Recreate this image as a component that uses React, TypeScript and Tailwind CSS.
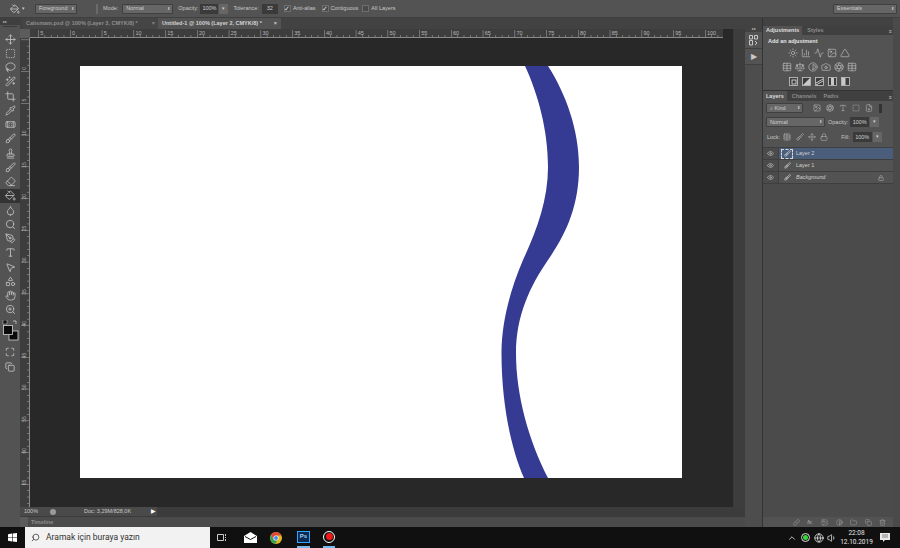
import {
  Activity, Aperture, BarChart3, Bandage, Camera, ChevronUp, Contrast, Copy, Crop, Droplet, Eraser, Eye, FileDown,
  Folder, Globe, Hand, Image, Link, Lock, Move, Brush, PaintBucket, Pipette, PenTool, Search, Scale, Shapes,
  SquareDashed, Stamp, Sun, Table, Trash2, Triangle, Type, Volume1, Wand2, ZoomIn, MousePointer2, Lasso, Maximize,
} from 'lucide-react';

const toolIcons = [
  Move, SquareDashed, Lasso, Wand2, Crop, Pipette, Bandage, Brush, Stamp, Brush, Eraser, PaintBucket, Droplet, Search,
  PenTool, Type, MousePointer2, Shapes, Hand, ZoomIn,
];

function Select({ label, className }: { label: string; className: string }) {
  return (
    <div className={`flex h-[10px] items-center justify-between rounded-[1px] border border-[#3f3f3f] bg-[#666666] pl-[3px] pr-[2px] text-[5.5px] text-[#cfcfcf] ${className}`}>
      <span>{label}</span>
      <span className="text-[4px] leading-none">⬍</span>
    </div>
  );
}

function Percent({ value, className }: { value: string; className: string }) {
  return (
    <div className="flex items-center gap-[1px]">
      <div className={`flex h-[10px] items-center justify-center bg-[#3a3a3a] text-[5.5px] text-[#d0d0d0] ${className}`}>{value}</div>
      <div className="flex h-[10px] w-[9px] items-center justify-center bg-[#666666] text-[5px] text-[#cfcfcf]">▾</div>
    </div>
  );
}

function Check({ label, on, className }: { label: string; on: boolean; className: string }) {
  return (
    <div className={`flex items-center gap-[2px] text-[5.5px] text-[#c8c8c8] ${className}`}>
      <div className="flex h-[7px] w-[7px] items-center justify-center border border-[#6e6e6e] bg-[#4a4a4a] text-[7px] leading-none text-[#e0e0e0]">
        {on ? '✓' : ''}
      </div>
      <span>{label}</span>
    </div>
  );
}

function HRuler() {
  const w = 703;
  const ticks = Array.from({ length: 112 }, (_, i) => i);
  const labels = [-5, 0, 5, 10, 15, 20, 25, 30, 35, 40, 45, 50, 55, 60, 65, 70, 75, 80, 85, 90, 95, 100];
  return (
    <svg width={w} height={9} className="block">
      <rect width={w} height={9} fill="#3d3d3d" />
      <rect y={8} width={w} height={1} fill="#8a8a8a" />
      <rect width={10} height={9} fill="#5c5c5c" />
      {ticks.map((i) => {
        const x = 18.25 + i * 6.35;
        return <rect key={i} x={x} y={i % 5 === 0 ? 1 : 6} width={0.6} height={i % 5 === 0 ? 7 : 2} fill="#9a9a9a" />;
      })}
      {labels.map((n) => {
        const x = 50 + (n / 5) * 31.75 + 2;
        return (
          <text key={n} x={x} y={6} fontSize={5.5} fill="#b5b5b5" fontFamily="Liberation Sans, sans-serif">
            {Math.abs(n)}
          </text>
        );
      })}
    </svg>
  );
}

function VRuler() {
  const h = 469;
  const ticks = Array.from({ length: 74 }, (_, i) => i);
  const labels = [0, 5, 10, 15, 20, 25, 30, 35, 40, 45, 50, 55, 60, 65];
  return (
    <svg width={10} height={h} className="block shrink-0">
      <rect width={10} height={h} fill="#3d3d3d" />
      <rect x={9} width={1} height={h} fill="#8a8a8a" />
      {ticks.map((i) => {
        const y = 1.5 + i * 6.35;
        return <rect key={i} x={i % 5 === 0 ? 1 : 7} y={y} width={i % 5 === 0 ? 8 : 2} height={0.6} fill="#9a9a9a" />;
      })}
      {labels.map((n) => {
        const y = 29 + (n / 5) * 31.75;
        return (
          <text key={n} x={5.5} y={y} fontSize={5} fill="#b5b5b5" fontFamily="Liberation Sans, sans-serif" transform={`rotate(-90 5.5 ${y})`} textAnchor="end">
            {n}
          </text>
        );
      })}
    </svg>
  );
}

function Toolbar() {
  return (
    <div className="flex w-5 shrink-0 flex-col bg-[#535353]">
      <div className="h-[7px] bg-[#3f3f3f] pl-[3px] text-[4px] leading-[7px] text-[#bbbbbb]">▸▸</div>
      <div className="mx-[3px] mt-[1px] h-[1px] bg-[#3a3a3a]" />
      <div className="mt-[5px] flex flex-col">
        {toolIcons.map((Icon, i) => (
          <div key={i} className={`flex h-[14.25px] items-center justify-center ${i === 11 ? 'bg-[#333333]' : ''}`}>
            <Icon size={11} strokeWidth={1.8} className="text-[#c4c4c4]" />
          </div>
        ))}
      </div>
      <div className="ml-[2px] mt-[3px] h-[17px] w-[17px]">
        <svg width={17} height={21} viewBox="0 0 17 21">
          <rect x={1} y={0} width={4} height={4} fill="#111" stroke="#ccc" strokeWidth={0.5} />
          <path d="M11 1 l3 0 l0 3" fill="none" stroke="#ccc" strokeWidth={0.8} />
          <rect x={7} y={11} width={9} height={9} fill="#0b0b0b" stroke="#d5d5d5" strokeWidth={0.8} />
          <rect x={1.5} y={5.5} width={9} height={9} fill="#0b0b0b" stroke="#d5d5d5" strokeWidth={0.8} />
        </svg>
      </div>
      <div className="mt-[7px] flex h-[15px] items-center justify-center">
        <Maximize size={10} className="text-[#c4c4c4]" />
      </div>
      <div className="flex h-[15px] items-center justify-center">
        <Copy size={10} className="text-[#c4c4c4]" />
      </div>
    </div>
  );
}

function Curve() {
  return (
    <svg viewBox="0 0 602 412" className="block h-full w-full">
      <path
        d="M445 0 L468 0 C486 28 499 64 499 101 C499 140 486 168 468 194 C450 220 436 250 436 287 C436 330 449 375 468 412 L444 412 C430 380 421.5 335 421.5 287 C421.5 255 431 222 443 194 C456 166 468 135 468 101 C468 64 458 28 445 0 Z"
        fill="#353b93"
      />
    </svg>
  );
}

function AdjSquare({ kind }: { kind: number }) {
  return (
    <svg width={9} height={9} viewBox="0 0 9 9" className="text-[#c9c9c9]">
      <rect x={0.5} y={0.5} width={8} height={8} fill="#3d3d3d" stroke="currentColor" strokeWidth={0.8} />
      {kind === 0 && <rect x={3} y={3} width={4} height={4} fill="none" stroke="currentColor" />}
      {kind === 1 && <path d="M1 8 L8 1 L8 8 Z" fill="currentColor" />}
      {kind === 2 && <path d="M1 6 L8 2 M1 8 L8 4" stroke="currentColor" />}
      {kind === 3 && <rect x={3} y={1} width={3} height={7} fill="currentColor" />}
      {kind === 4 && <rect x={1} y={1} width={3.5} height={7} fill="currentColor" />}
    </svg>
  );
}

function AdjPanel() {
  const s = { size: 10, strokeWidth: 1.5, className: 'text-[#c4c4c4]' };
  return (
    <div className="flex h-[64px] flex-col bg-[#535353]">
      <div className="flex h-[9px] items-end bg-[#404040] text-[5.5px] font-bold">
        <div className="flex h-[9px] items-center bg-[#535353] px-[3px] text-[#dddddd]">Adjustments</div>
        <div className="flex h-[9px] items-center px-[5px] text-[#8c8c8c]">Styles</div>
        <div className="ml-auto pr-[1px] text-[5px] text-[#cccccc]">≡</div>
      </div>
      <div className="mt-[2px] pl-[5px] text-[5.5px] font-bold text-[#e4e4e4]">Add an adjustment</div>
      <div className="mt-[3px] flex flex-col items-center gap-[4px] pr-[18px]">
        <div className="flex h-[10px] gap-[3px]">
          <Sun {...s} /><BarChart3 {...s} /><Activity {...s} /><Image {...s} /><Triangle {...s} />
        </div>
        <div className="flex h-[10px] gap-[3px]">
          <Table {...s} /><Scale {...s} /><Contrast {...s} /><Camera {...s} /><Aperture {...s} /><Table {...s} />
        </div>
        <div className="flex h-[10px] items-center gap-[4px]">
          {[0, 1, 2, 3, 4].map((k) => <AdjSquare key={k} kind={k} />)}
        </div>
      </div>
    </div>
  );
}

function LayerRow({ name, active, italic, locked }: { name: string; active?: boolean; italic?: boolean; locked?: boolean }) {
  return (
    <div className="flex h-3 border-b border-[#3e3e3e]">
      <div className="flex w-4 shrink-0 items-center justify-center border-r border-[#3e3e3e]">
        <Eye size={7} className="text-[#c6c6c6]" />
      </div>
      <div className={`flex flex-1 items-center pl-[2px] text-[5.5px] text-[#d0d0d0] ${active ? 'bg-[#4a5e7c]' : 'bg-[#535353]'} ${italic ? 'italic' : ''}`}>
        <div className={`flex h-[10px] w-[12px] items-center justify-center ${active ? 'border border-dashed border-[#d8d8d8]' : ''}`}>
          <Brush size={7} className="text-[#e0e0e0]" />
        </div>
        <span className="ml-[3px]">{name}</span>
        {locked && <Lock size={6} className="ml-auto mr-[9px] text-[#b5b5b5]" />}
      </div>
    </div>
  );
}

function LayersPanel() {
  const t = { size: 8, strokeWidth: 1.6, className: 'text-[#bdbdbd]' };
  const f = { size: 7, strokeWidth: 1.6, className: 'text-[#a6a6a6]' };
  return (
    <div className="flex flex-1 flex-col bg-[#4b4b4b]">
      <div className="flex h-[10px] items-end bg-[#404040] text-[5.5px] font-bold">
        <div className="flex h-[10px] items-center bg-[#535353] px-[3px] text-[#dddddd]">Layers</div>
        <div className="flex h-[10px] items-center px-[5px] text-[#8c8c8c]">Channels</div>
        <div className="flex h-[10px] items-center px-[2px] text-[#8c8c8c]">Paths</div>
        <div className="ml-auto pr-[1px] text-[5px] text-[#cccccc]">≡</div>
      </div>
      <div className="flex h-[46px] flex-col bg-[#535353] pl-[3px] text-[5.5px] text-[#c8c8c8]">
        <div className="mt-[1px] flex h-[12px] items-center gap-[5px]">
          <Select label="⌕ Kind" className="w-[37px]" />
          <Image {...t} className="ml-[5px] text-[#bdbdbd]" /><Aperture {...t} /><Type {...t} /><SquareDashed {...t} /><FileDown {...t} />
          <div className="ml-[1px] h-[9px] w-[3px] bg-[#333333]" />
        </div>
        <div className="mt-[2px] flex h-[12px] items-center">
          <Select label="Normal" className="w-[59px]" />
          <span className="ml-[3px]">Opacity:</span>
          <div className="ml-[2px]"><Percent value="100%" className="w-[19px]" /></div>
        </div>
        <div className="mt-[3px] flex h-[12px] items-center">
          <span className="ml-[1px]">Lock:</span>
          <Table {...t} className="ml-[3px] text-[#bdbdbd]" />
          <Brush {...t} className="ml-[5px] text-[#bdbdbd]" />
          <Move {...t} className="ml-[4px] text-[#bdbdbd]" />
          <Lock {...t} className="ml-[4px] text-[#bdbdbd]" />
          <span className="ml-[13px]">Fill:</span>
          <div className="ml-[3px]"><Percent value="100%" className="w-[19px]" /></div>
        </div>
      </div>
      <div className="flex flex-1 flex-col border-t border-[#3e3e3e]">
        <LayerRow name="Layer 2" active />
        <LayerRow name="Layer 1" />
        <LayerRow name="Background" italic locked />
      </div>
      <div className="flex h-[10px] items-center justify-end gap-[7.5px] bg-[#535353] pr-[7px]">
        <Link {...f} />
        <span className="text-[6px] italic text-[#b5b5b5]">fx.</span>
        <Image {...f} /><Contrast {...f} /><Folder {...f} /><Copy {...f} /><Trash2 {...f} />
      </div>
    </div>
  );
}

export default function App() {
  return (
    <div className="flex h-[548px] w-[900px] flex-col overflow-hidden bg-[#535353] font-['Liberation_Sans',sans-serif]">
      {/* options bar */}
      <div className="flex h-[18px] shrink-0 items-center border-b border-[#3f3f3f] bg-[#535353]">
        <PaintBucket size={10} className="ml-[10px] text-[#c8c8c8]" />
        <span className="ml-[2px] text-[5px] text-[#c8c8c8]">▾</span>
        <Select label="Foreground" className="ml-[10px] w-[42px]" />
        <div className="ml-[19px] h-[10px] w-[2px] bg-[#6a6a6a]" />
        <span className="ml-[5px] text-[5.5px] text-[#c8c8c8]">Mode:</span>
        <Select label="Normal" className="ml-[4px] w-[51px]" />
        <span className="ml-[5px] text-[5.5px] text-[#c8c8c8]">Opacity:</span>
        <div className="ml-[2px]"><Percent value="100%" className="w-[18px]" /></div>
        <span className="ml-[5px] text-[5.5px] text-[#c8c8c8]">Tolerance:</span>
        <div className="ml-[3px] flex h-[10px] w-[16px] items-center justify-center bg-[#3a3a3a] text-[5.5px] text-[#d0d0d0]">32</div>
        <Check label="Anti-alias" on className="ml-[6px]" />
        <Check label="Contiguous" on className="ml-[6px]" />
        <Check label="All Layers" on={false} className="ml-[4px]" />
        <Select label="Essentials" className="ml-auto mr-[3px] w-[64px]" />
      </div>

      <div className="flex min-h-0 flex-1">
        <Toolbar />

        {/* document column */}
        <div className="flex w-[725px] shrink-0 flex-col bg-[#282828]">
          <div className="flex h-[11px] shrink-0 items-end bg-[#424242] pl-[3px] text-[5.5px] font-bold">
            <div className="flex h-[11px] w-[135px] items-center justify-between bg-[#454545] px-[3px] text-[#8f8f8f]">
              <span>Calısmam.psd @ 100% (Layer 3, CMYK/8) *</span>
              <span>×</span>
            </div>
            <div className="flex h-[11px] w-[123px] items-center justify-between bg-[#535353] px-[4px] text-[#d4d4d4]">
              <span>Untitled-1 @ 100% (Layer 2, CMYK/8) *</span>
              <span>×</span>
            </div>
          </div>
          <div className="flex min-h-0 flex-1">
            <div className="flex w-[713px] shrink-0 flex-col">
              <HRuler />
              <div className="flex min-h-0 flex-1">
                <VRuler />
                <div className="flex-1 pl-[50px] pt-[28px]">
                  <div className="h-[412px] w-[602px] bg-white">
                    <Curve />
                  </div>
                </div>
              </div>
            </div>
            <div className="w-[12px] shrink-0 border-l border-[#3a3a3a] bg-[#3d3d3d]" />
          </div>
          <div className="flex h-[9px] shrink-0 items-center bg-[#3c3c3c] text-[5.5px] text-[#c8c8c8]">
            <div className="flex h-[9px] w-[137px] items-center bg-[#4a4a4a] pl-[4px]">
              <span className="w-[26px]">100%</span>
              <div className="h-[6px] w-[6px] rounded-full bg-[#9a9a9a]" />
              <span className="ml-[28px]">Doc: 3,29M/828,0K</span>
              <span className="ml-auto pr-[1px] text-[6px] text-white">▶</span>
            </div>
          </div>
          <div className="flex h-[11px] shrink-0 items-center border-t border-[#3a3a3a] bg-[#4b4b4b] text-[5.5px] font-bold text-[#8c8c8c]">
            <div className="h-[10px] w-[8px] bg-[#5c5c5c]" />
            <span className="ml-[3px]">Timeline</span>
          </div>
        </div>

        {/* collapsed dock */}
        <div className="flex w-[18px] shrink-0 flex-col border-r border-[#333333] bg-[#4d4d4d]">
          <div className="flex h-[14px] items-end justify-center bg-[#424242] text-[4px] leading-[6px] text-[#bbbbbb]">▸▸</div>
          <div className="flex h-[17px] items-center justify-center border-b border-[#3f3f3f] bg-[#535353]">
            <svg width={9} height={11} viewBox="0 0 9 11" fill="none" stroke="#c8c8c8" strokeWidth={1}>
              <path d="M.5 .5 H3.5 V4 H.5 Z M5.5 .5 H8.5 V4 H5.5 Z M.5 5.5 H3.5 V10 H.5 Z M6 6 L8 8 L6 10" />
            </svg>
          </div>
          <div className="flex h-[16px] items-center justify-center border-b border-[#3f3f3f] bg-[#535353] text-[8px] text-[#c8c8c8]">▶</div>
        </div>

        {/* right panels */}
        <div className="flex min-w-0 flex-1">
          <div className="flex w-[130px] shrink-0 flex-col">
            <div className="h-[8px] shrink-0 bg-[#424242]" />
            <AdjPanel />
            <div className="h-[1px] shrink-0 bg-[#333333]" />
            <LayersPanel />
          </div>
          <div className="flex-1 bg-[#4a4a4a]" />
        </div>
      </div>

      {/* taskbar */}
      <div className="flex h-[21px] shrink-0 items-center bg-[#101010]">
        <svg width={9} height={9} viewBox="0 0 9 9" className="ml-[8px]">
          <path d="M0 1.2 L4 .6 V4.2 H0 Z M4.6 .5 L9 0 V4.2 H4.6 Z M0 4.8 H4 V8.4 L0 7.8 Z M4.6 4.8 H9 V9 L4.6 8.5 Z" fill="#ffffff" />
        </svg>
        <div className="ml-[8px] flex h-[21px] w-[185px] items-center bg-[#f2f2f2] pl-[6px] font-['Roboto',sans-serif] text-[8.5px] text-[#333333]">
          <Search size={9} className="-scale-x-100 text-[#333333]" />
          <span className="ml-[6px]">Aramak için buraya yazın</span>
        </div>
        <svg width={10} height={9} viewBox="0 0 10 9" fill="none" stroke="#cccccc" className="ml-[7px]">
          <path d="M.5 1.5 H6.5 V7.5 H.5 Z M8.5 1 V3 M8.5 4 V5 M8.5 6 V8" />
        </svg>
        <svg width={13} height={11} viewBox="0 0 13 11" className="ml-[17px]">
          <path d="M0 4 L6.5 0 L13 4 V11 H0 Z" fill="#ffffff" />
          <path d="M1 4.5 L6.5 7.5 L12 4.5" fill="none" stroke="#101010" />
        </svg>
        <svg width={12} height={12} viewBox="0 0 12 12" className="ml-[13px]">
          <circle cx={6} cy={6} r={6} fill="#e8b71e" />
          <path d="M6 0 A6 6 0 0 0 .8 3 L3.6 7.5 L6 3.5 H11.2 A6 6 0 0 0 6 0 Z" fill="#d94a3c" />
          <path d="M.8 3 A6 6 0 0 0 5.2 11.9 L7.8 7.7 L3.6 7.5 Z" fill="#379f52" />
          <circle cx={6} cy={6} r={2.6} fill="#ffffff" />
          <circle cx={6} cy={6} r={2} fill="#4a8bf0" />
        </svg>
        <div className="ml-[15px] flex h-[21px] items-center border-b-2 border-[#76b9ed]">
          <div className="flex h-[12px] w-[13px] items-center justify-center border border-[#31a8ff] bg-[#0e2a52] text-[6px] font-bold text-[#9ed5ff]">Ps</div>
        </div>
        <div className="ml-[13px] flex h-[21px] items-center border-b-2 border-[#76b9ed]">
          <div className="flex h-[12px] w-[12px] items-center justify-center rounded-full border border-white">
            <div className="h-[7px] w-[7px] rounded-full bg-[#f01818]" />
          </div>
        </div>
        <ChevronUp size={10} className="ml-auto text-[#dddddd]" />
        <div className="ml-[4px] flex h-[9px] w-[9px] items-center justify-center rounded-full border border-[#dddddd]">
          <div className="h-[5px] w-[5px] rounded-full bg-[#35d835]" />
        </div>
        <Globe size={10} className="ml-[4px] text-[#dddddd]" />
        <Volume1 size={10} className="ml-[3px] text-[#dddddd]" />
        <div className="ml-[3px] flex w-[33px] flex-col items-center font-['Roboto',sans-serif] text-[6.5px] leading-[9px] text-[#e6e6e6]">
          <span>22:08</span>
          <span>12.10.2019</span>
        </div>
        <svg width={10} height={9} viewBox="0 0 10 9" className="ml-[7px] mr-[10px]">
          <path d="M0 0 H10 V7 H5 L3 9 V7 H0 Z" fill="#e8e8e8" />
          <path d="M2 2 H8 M2 4 H8" stroke="#555555" strokeWidth={0.7} />
        </svg>
      </div>
    </div>
  );
}
